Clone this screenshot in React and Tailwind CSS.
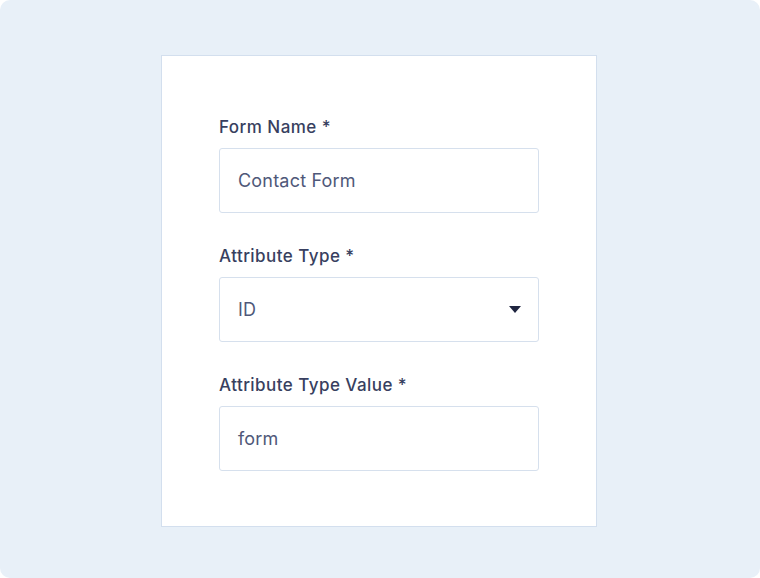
export default function App() {
  const Field = ({ label, value, select }) => (
    <div className="flex flex-col">
      <div className="text-[17px] leading-[20px] font-medium text-[#383f60] tracking-[0.45px] mb-[11px]">
        {label} <span>*</span>
      </div>
      <div className="h-[65px] w-[320px] border border-[#d6e0ed] rounded-[3px] bg-white flex items-center pl-[18px] pr-[17px] justify-between">
        <span className="text-[18px] text-[#4f5879] tracking-[0.2px]">{value}</span>
        {select && (
          <svg width="12" height="7" viewBox="0 0 12 7">
            <path d="M0 0 L12 0 L6 7 Z" fill="#1f2540" />
          </svg>
        )}
      </div>
    </div>
  );
  return (
    <div className="w-[760px] h-[578px] bg-white" style={{ fontFamily: 'Inter, "Noto Sans", sans-serif' }}>
      <div className="w-full h-full bg-[#e8f0f8] rounded-[10px] flex pl-[161px] pt-[55px]">
        <div className="w-[436px] h-[472px] bg-white border border-[#d3dfee] pt-[61px] pl-[57px] flex flex-col gap-[33px]">
          <Field label="Form Name" value="Contact Form" />
          <Field label="Attribute Type" value="ID" select />
          <Field label="Attribute Type Value" value="form" />
        </div>
      </div>
    </div>
  );
}
